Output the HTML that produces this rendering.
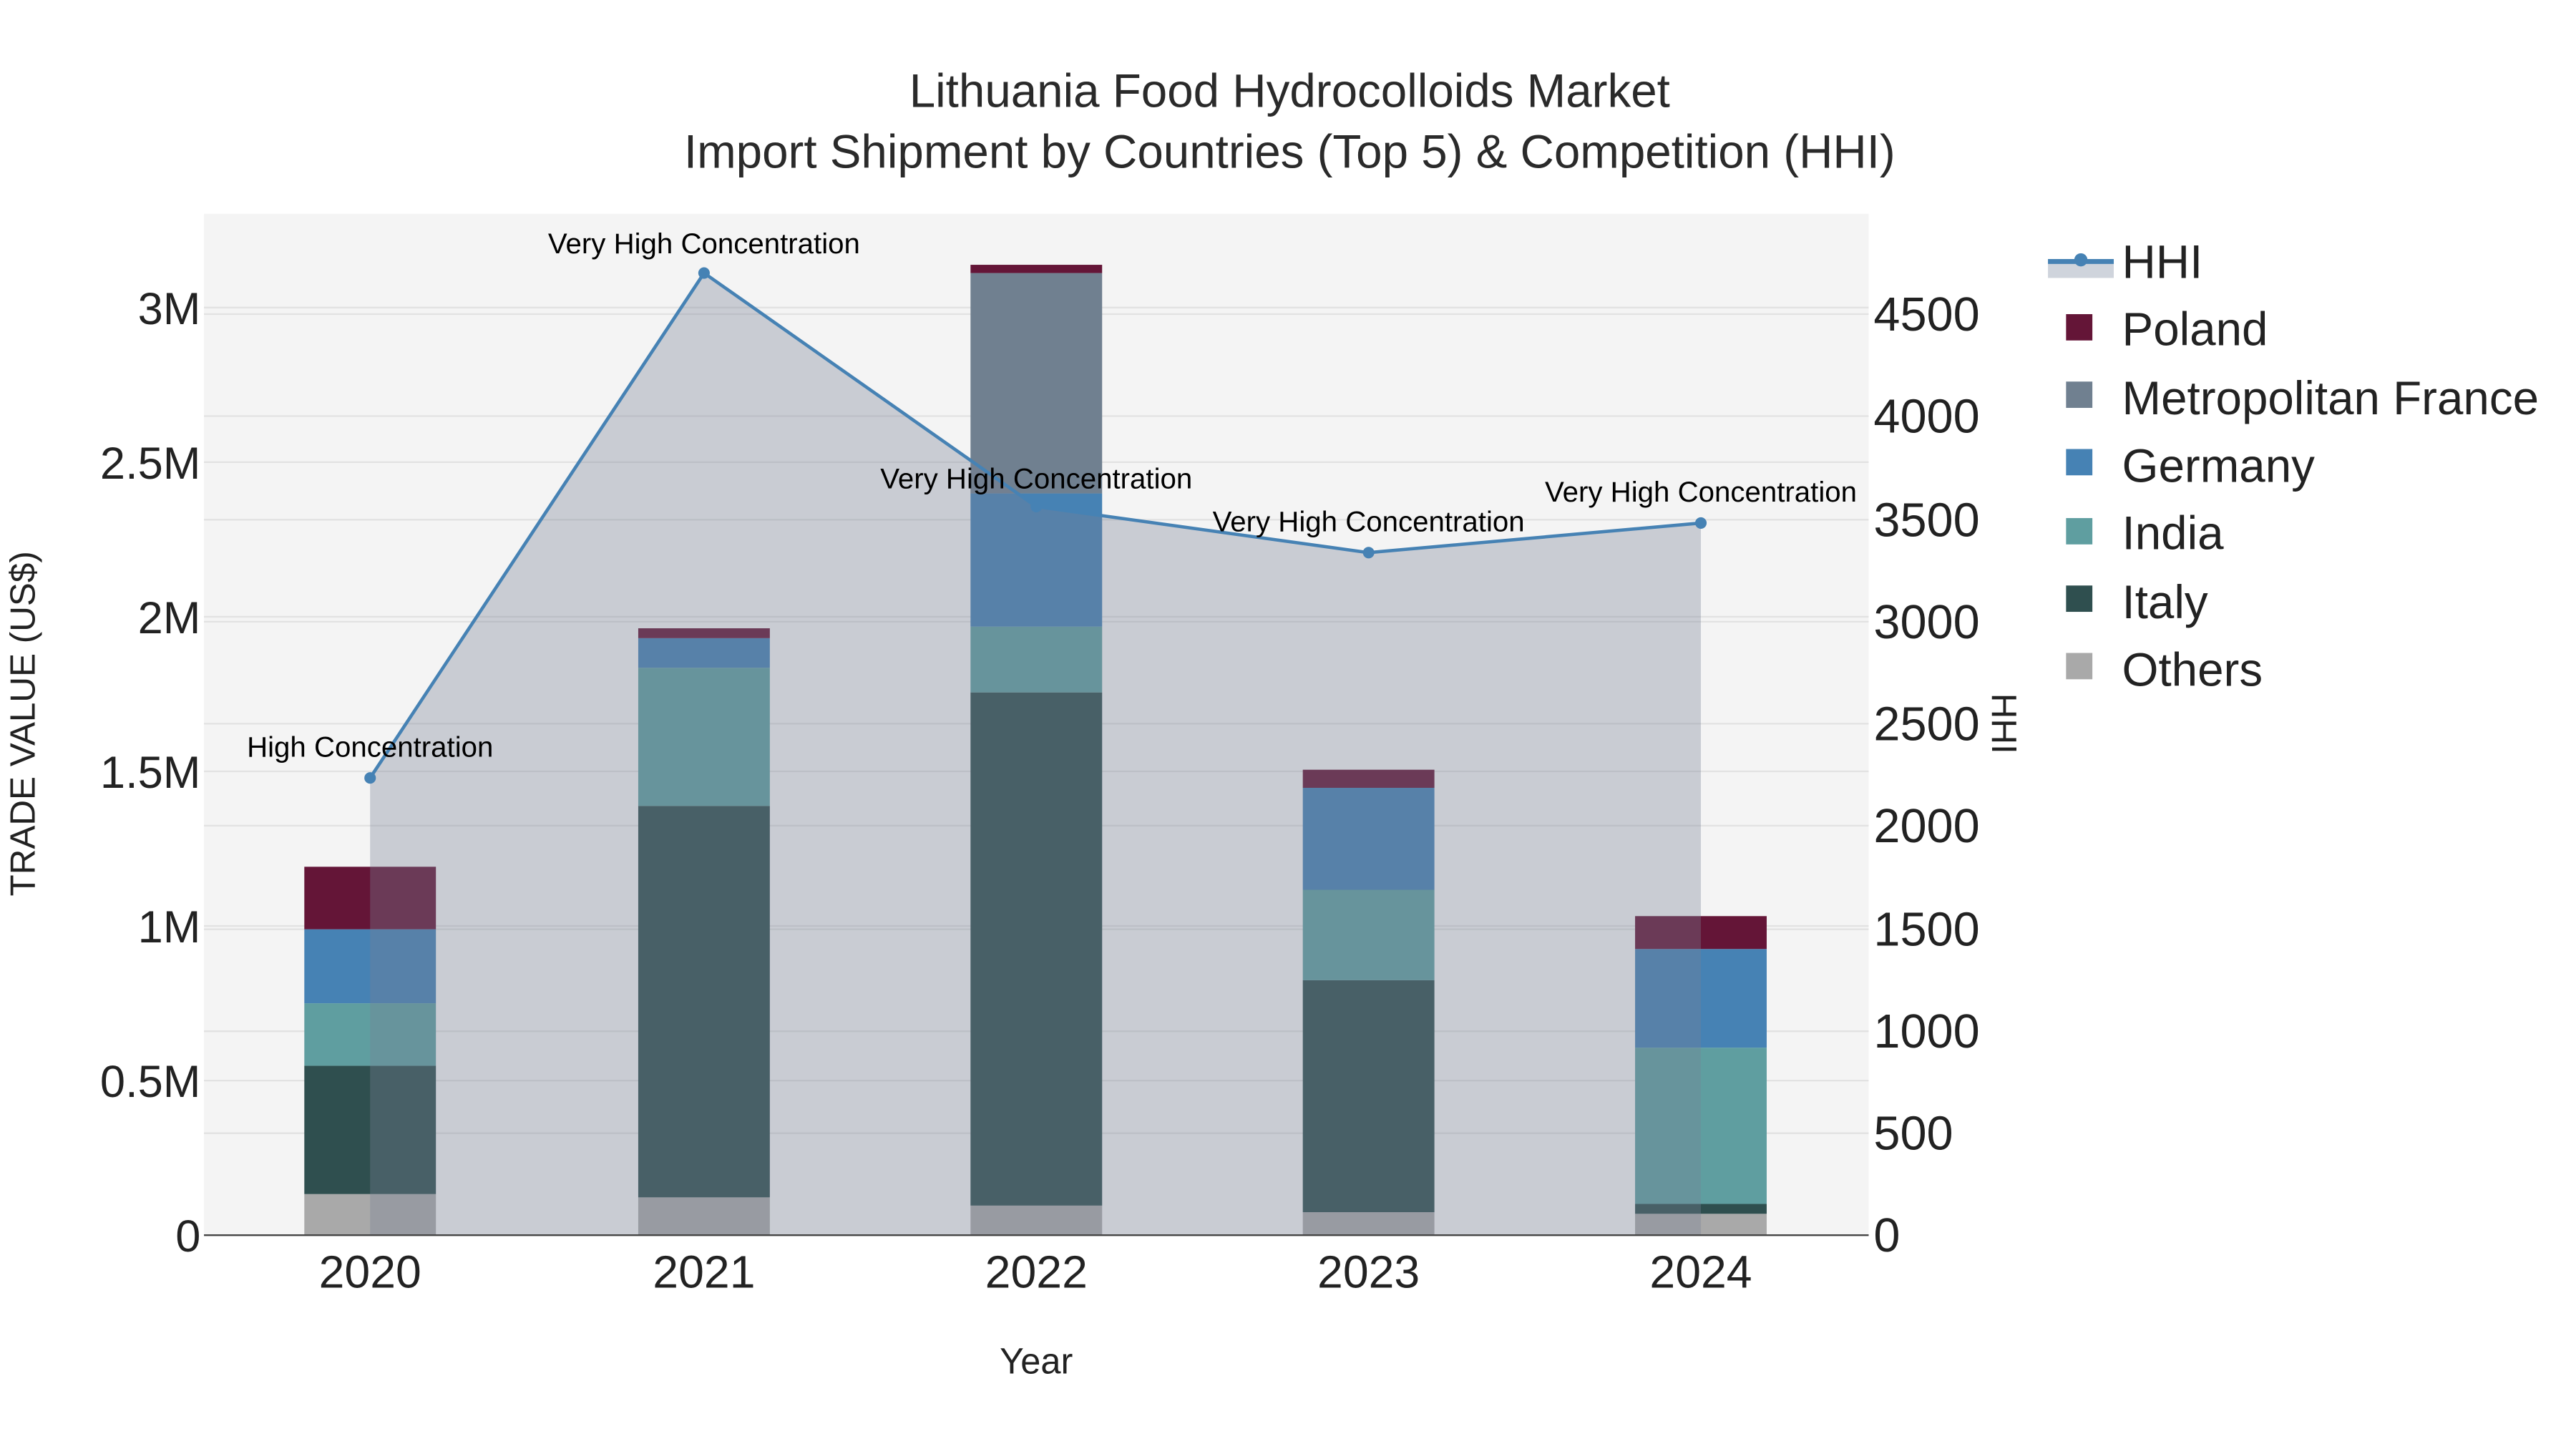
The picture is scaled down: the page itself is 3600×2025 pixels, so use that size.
<!DOCTYPE html>
<html><head><meta charset="utf-8"><style>
html,body{margin:0;padding:0;background:#fff;}
svg{display:block;font-family:"Liberation Sans",sans-serif;}
</style></head><body>
<svg width="3600" height="2025" viewBox="0 0 1566 881" preserveAspectRatio="none" xmlns="http://www.w3.org/2000/svg">
<rect width="1566" height="881" fill="#fff"/>
<rect x="124" y="130" width="1012" height="621" fill="#f4f4f4"/>
<g stroke="#e2e2e2" stroke-width="1">
<line x1="124" x2="1136" y1="657" y2="657"/><line x1="124" x2="1136" y1="563" y2="563"/>
<line x1="124" x2="1136" y1="469" y2="469"/><line x1="124" x2="1136" y1="375" y2="375"/>
<line x1="124" x2="1136" y1="281" y2="281"/><line x1="124" x2="1136" y1="187" y2="187"/>
<line x1="124" x2="1136" y1="689" y2="689"/><line x1="124" x2="1136" y1="627" y2="627"/>
<line x1="124" x2="1136" y1="565" y2="565"/><line x1="124" x2="1136" y1="502" y2="502"/>
<line x1="124" x2="1136" y1="440" y2="440"/><line x1="124" x2="1136" y1="378" y2="378"/>
<line x1="124" x2="1136" y1="316" y2="316"/><line x1="124" x2="1136" y1="253" y2="253"/>
<line x1="124" x2="1136" y1="191" y2="191"/>
</g>
<g>
<rect x="185" y="726" width="80" height="25" fill="#a9a9a9"/>
<rect x="185" y="648" width="80" height="78" fill="#2f4f4f"/>
<rect x="185" y="610" width="80" height="38" fill="#5f9ea0"/>
<rect x="185" y="565" width="80" height="45" fill="#4682b4"/>
<rect x="185" y="527" width="80" height="38" fill="#641537"/>

<rect x="388" y="728" width="80" height="23" fill="#a9a9a9"/>
<rect x="388" y="490" width="80" height="238" fill="#2f4f4f"/>
<rect x="388" y="406" width="80" height="84" fill="#5f9ea0"/>
<rect x="388" y="388" width="80" height="18" fill="#4682b4"/>
<rect x="388" y="382" width="80" height="6" fill="#641537"/>

<rect x="590" y="733" width="80" height="18" fill="#a9a9a9"/>
<rect x="590" y="421" width="80" height="312" fill="#2f4f4f"/>
<rect x="590" y="381" width="80" height="40" fill="#5f9ea0"/>
<rect x="590" y="300" width="80" height="81" fill="#4682b4"/>
<rect x="590" y="166" width="80" height="134" fill="#708090"/>
<rect x="590" y="161" width="80" height="5" fill="#641537"/>

<rect x="792" y="737" width="80" height="14" fill="#a9a9a9"/>
<rect x="792" y="596" width="80" height="141" fill="#2f4f4f"/>
<rect x="792" y="541" width="80" height="55" fill="#5f9ea0"/>
<rect x="792" y="479" width="80" height="62" fill="#4682b4"/>
<rect x="792" y="468" width="80" height="11" fill="#641537"/>

<rect x="994" y="738" width="80" height="13" fill="#a9a9a9"/>
<rect x="994" y="732" width="80" height="6" fill="#2f4f4f"/>
<rect x="994" y="637" width="80" height="95" fill="#5f9ea0"/>
<rect x="994" y="577" width="80" height="60" fill="#4682b4"/>
<rect x="994" y="557" width="80" height="20" fill="#641537"/>
</g>
<polygon points="225,751 225,473 428,166 630,308 832,336 1034,318 1034,751" fill="rgba(121,128,148,0.35)"/>
<polyline points="225,473 428,166 630,308 832,336 1034,318" fill="none" stroke="#4682b4" stroke-width="2"/>
<g fill="#4682b4"><circle cx="225" cy="473" r="3.5"/><circle cx="428" cy="166" r="3.5"/><circle cx="630" cy="308" r="3.5"/><circle cx="832" cy="336" r="3.5"/><circle cx="1034" cy="318" r="3.5"/></g>
<line x1="124" x2="1136" y1="751" y2="751" stroke="#444" stroke-width="1"/>
<g font-size="17.5" fill="#000" text-anchor="middle">
<text x="225" y="460">High Concentration</text>
<text x="428" y="154">Very High Concentration</text>
<text x="630" y="297">Very High Concentration</text>
<text x="832" y="323">Very High Concentration</text>
<text x="1034" y="305">Very High Concentration</text>
</g>
<g font-size="28.5" fill="#2a2a2a" text-anchor="middle">
<text x="784" y="65">Lithuania Food Hydrocolloids Market</text>
<text x="784" y="102">Import Shipment by Countries (Top 5) &amp; Competition (HHI)</text>
</g>
<g font-size="27.5" fill="#222" text-anchor="end">
<text x="122" y="761">0</text><text x="122" y="667">0.5M</text><text x="122" y="573">1M</text>
<text x="122" y="479">1.5M</text><text x="122" y="385">2M</text><text x="122" y="291">2.5M</text><text x="122" y="197">3M</text>
</g>
<g font-size="29" fill="#222">
<text x="1139" y="761">0</text><text x="1139" y="699">500</text><text x="1139" y="637">1000</text>
<text x="1139" y="575">1500</text><text x="1139" y="512">2000</text><text x="1139" y="450">2500</text>
<text x="1139" y="388">3000</text><text x="1139" y="326">3500</text><text x="1139" y="263">4000</text><text x="1139" y="201">4500</text>
</g>
<g font-size="28" fill="#222" text-anchor="middle">
<text x="225" y="783">2020</text><text x="428" y="783">2021</text><text x="630" y="783">2022</text><text x="832" y="783">2023</text><text x="1034" y="783">2024</text>
</g>
<text x="630" y="835" font-size="22" fill="#222" text-anchor="middle">Year</text>
<text transform="translate(21,440) rotate(-90)" font-size="21.5" fill="#222" text-anchor="middle">TRADE VALUE (US$)</text>
<text transform="translate(1211,440) rotate(90)" font-size="21.5" fill="#222" text-anchor="middle">HHI</text>
<rect x="1245" y="159" width="40" height="10" fill="#cfd4dc"/>
<line x1="1245" x2="1285" y1="159" y2="159" stroke="#4682b4" stroke-width="3"/>
<circle cx="1265" cy="158" r="4" fill="#4682b4"/>
<g>
<rect x="1256" y="191" width="16" height="16" fill="#641537"/>
<rect x="1256" y="232" width="16" height="16" fill="#708090"/>
<rect x="1256" y="273" width="16" height="16" fill="#4682b4"/>
<rect x="1256" y="315" width="16" height="16" fill="#5f9ea0"/>
<rect x="1256" y="356" width="16" height="16" fill="#2f4f4f"/>
<rect x="1256" y="397" width="16" height="16" fill="#a9a9a9"/>
</g>
<g font-size="28.5" fill="#222">
<text x="1290" y="169">HHI</text><text x="1290" y="210">Poland</text><text x="1290" y="252">Metropolitan France</text>
<text x="1290" y="293">Germany</text><text x="1290" y="334">India</text><text x="1290" y="376">Italy</text><text x="1290" y="417">Others</text>
</g>
</svg>
</body></html>
